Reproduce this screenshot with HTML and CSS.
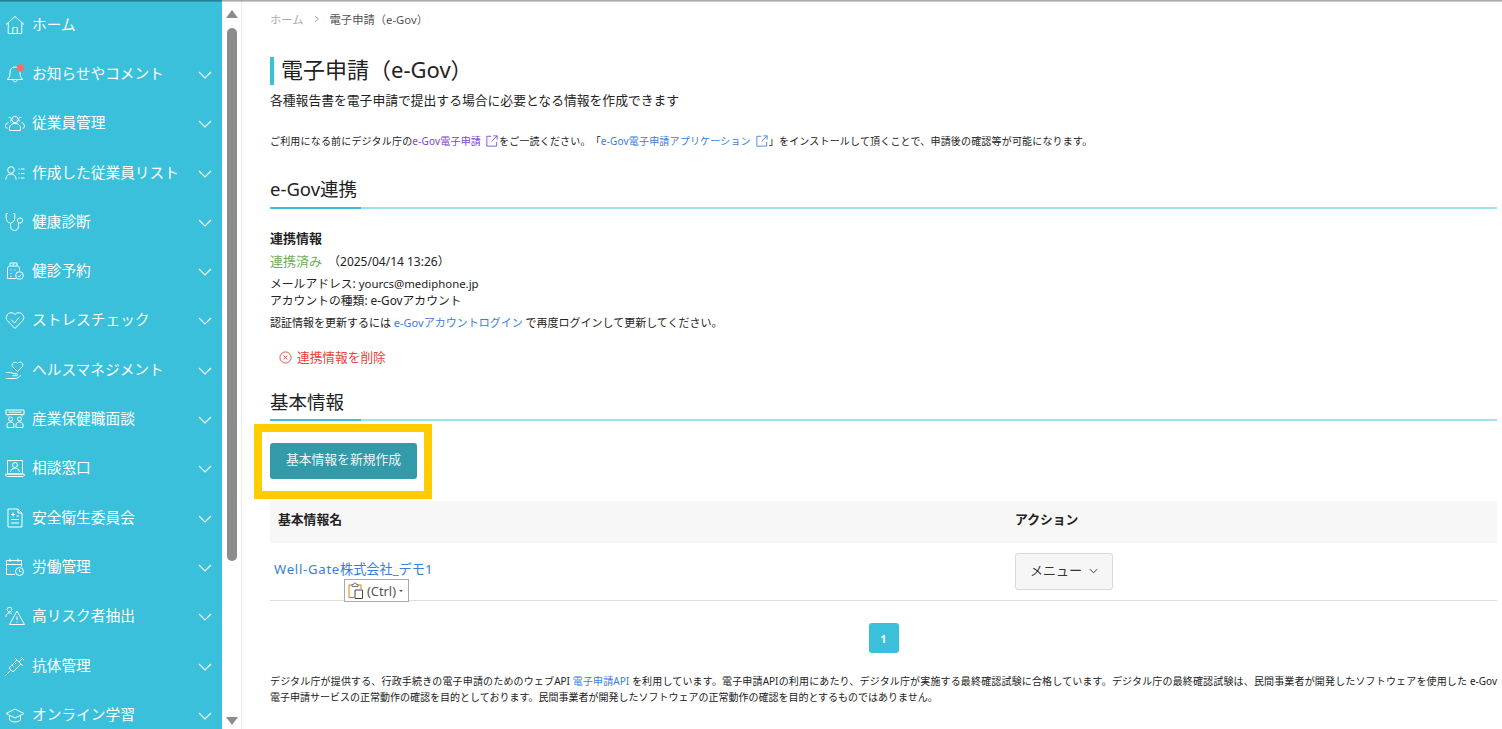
FILE: index.html
```html
<!DOCTYPE html>
<html lang="ja">
<head>
    <meta charset="UTF-8">
    <meta name="viewport" content="width=device-width, initial-scale=1.0">
    <title>電子申請（e-Gov）</title>
    <link rel="stylesheet" href="styles.css">
</head>
<body>
    <div class="top-shadow"></div>
    <nav class="sidebar">
        <a class="nav-item">
            <svg class="nav-icon" viewBox="0 0 20 20"><path d="M1 9.500 10 1.500l9 8M3.200 8v10.500h13.600V8M7.800 18.500v-6h4.400v6"/></svg>
            <span class="nav-label">ホーム</span>
        </a>
        <a class="nav-item">
            <svg class="nav-icon" viewBox="0 0 20 20"><path d="M10 3c-3.500 0-5 2.500-5 5.500 0 3.500-.8 5.500-3 7h16c-2.200-1.500-3-3.500-3-7C15 5.500 13.500 3 10 3zM7.800 15.500c0 3 4.400 3 4.400 0"/><circle class="nav-dot" cx="15.500" cy="4" r="3.800"/></svg>
            <span class="nav-label">お知らせやコメント</span>
            <svg class="nav-chevron" viewBox="0 0 14 8"><path d="M1 1l6 6 6-6"/></svg>
        </a>
        <a class="nav-item">
            <svg class="nav-icon" viewBox="0 0 20 20"><circle cx="10" cy="6.500" r="3.200"/><path d="M4.500 17.500v-2.500c0-3 2.200-4.500 5.500-4.500s5.500 1.500 5.500 4.500v2.500zM3.500 4.500a2 2 0 1 1 1.500 3.700M16.500 4.500a2 2 0 1 0-1.500 3.700M3.500 9.500C1.500 10 .5 11.500.5 13.500c0 1 .6 1.700 2 1.700M16.500 9.500c2 .5 3 2 3 4 0 1-.6 1.700-2 1.700"/></svg>
            <span class="nav-label">従業員管理</span>
            <svg class="nav-chevron" viewBox="0 0 14 8"><path d="M1 1l6 6 6-6"/></svg>
        </a>
        <a class="nav-item">
            <svg class="nav-icon" viewBox="0 0 20 20"><circle cx="6" cy="7" r="3.300"/><path d="M.8 16.500c.3-3.500 2.200-5.500 5.200-5.500s4.900 2 5.200 5.500M13.500 6h1.200M16 6h3.500M13.500 10.500h1.200M16 10.500h3.500M13.500 15h1.200M16 15h3.500"/></svg>
            <span class="nav-label">作成した従業員リスト</span>
            <svg class="nav-chevron" viewBox="0 0 14 8"><path d="M1 1l6 6 6-6"/></svg>
        </a>
        <a class="nav-item">
            <svg class="nav-icon" viewBox="0 0 20 20"><path d="M3 1.500H1.200v4.500c0 3 2 5 4.300 5s4.300-2 4.300-5V1.500H8M5.500 11v3.500c0 2.500 2 4 4 4s4-1.500 4-4V11"/><circle cx="15" cy="8.500" r="2.600"/></svg>
            <span class="nav-label">健康診断</span>
            <svg class="nav-chevron" viewBox="0 0 14 8"><path d="M1 1l6 6 6-6"/></svg>
        </a>
        <a class="nav-item">
            <svg class="nav-icon" viewBox="0 0 20 20"><path d="M11 17.500H2.500V6.500l2-1.500h8l2 1.500v3M5 5V2h7v3M8.500 2.800v1.600M7.700 3.600h1.600M5.500 9h1M9.500 9h1M5.500 12.500h1M5.500 15.500h1"/><circle cx="14.500" cy="14.500" r="3.800"/><path d="M13 14.800l1.200 1.200 2-2.500"/></svg>
            <span class="nav-label">健診予約</span>
            <svg class="nav-chevron" viewBox="0 0 14 8"><path d="M1 1l6 6 6-6"/></svg>
        </a>
        <a class="nav-item">
            <svg class="nav-icon" viewBox="0 0 20 20"><path d="M10 18.500 2.300 10.500C-1.500 6 5.500-.5 10 4.500c4.500-5 11.500 1.500 7.700 6zM6 9.500l3.500 3.500 4.500-5.500"/></svg>
            <span class="nav-label">ストレスチェック</span>
            <svg class="nav-chevron" viewBox="0 0 14 8"><path d="M1 1l6 6 6-6"/></svg>
        </a>
        <a class="nav-item">
            <svg class="nav-icon" viewBox="0 0 20 20"><path d="M12.500 11.500 7.800 6.800C5.500 3.500 10 .5 12.500 3.500c2.500-3 7 0 4.700 3.300zM1 12.500h4.500c1.500 0 2 1.200 3.500 1.200h2.500c1.300 0 1.300 2 0 2H7.500M1 18.500h9.500c2 0 4-2 5.500-3.500"/></svg>
            <span class="nav-label">ヘルスマネジメント</span>
            <svg class="nav-chevron" viewBox="0 0 14 8"><path d="M1 1l6 6 6-6"/></svg>
        </a>
        <a class="nav-item">
            <svg class="nav-icon" viewBox="0 0 20 20"><path d="M1 1h18v4.500H1zM3.500 3.200h13M3 5.500v2M17 5.500v2"/><circle cx="5.500" cy="10" r="2"/><circle cx="14.500" cy="10" r="2"/><path d="M2 18.500v-2.500c0-2 1.500-3 3.500-3s3.500 1 3.500 3v2.500zM11 18.500v-2.500c0-2 1.500-3 3.500-3s3.500 1 3.500 3v2.500z"/></svg>
            <span class="nav-label">産業保健職面談</span>
            <svg class="nav-chevron" viewBox="0 0 14 8"><path d="M1 1l6 6 6-6"/></svg>
        </a>
        <a class="nav-item">
            <svg class="nav-icon" viewBox="0 0 20 20"><path d="M2.500 2.500h15V16h-15zM.8 16h18.400v1.500l-1 1H1.800l-1-1z"/><circle cx="10" cy="7" r="2.500"/><path d="M5.500 14c.3-2.500 2-3.800 4.500-3.800s4.200 1.300 4.500 3.800"/></svg>
            <span class="nav-label">相談窓口</span>
            <svg class="nav-chevron" viewBox="0 0 14 8"><path d="M1 1l6 6 6-6"/></svg>
        </a>
        <a class="nav-item">
            <svg class="nav-icon" viewBox="0 0 20 20"><path d="M3 1h10l4 4v14H3zM13 1v4h4M6 6.500h4M8 4.500v4M11.500 8h2.500M6 11.500h8M6 15h8"/></svg>
            <span class="nav-label">安全衛生委員会</span>
            <svg class="nav-chevron" viewBox="0 0 14 8"><path d="M1 1l6 6 6-6"/></svg>
        </a>
        <a class="nav-item">
            <svg class="nav-icon" viewBox="0 0 20 20"><path d="M10 17.500H1.500V3.500h15v6M1.500 7.500h15M5 1.500v3.500M13 1.500v3.500"/><circle cx="14.500" cy="14.500" r="4"/><path d="M14.500 12.500v2.200h2"/></svg>
            <span class="nav-label">労働管理</span>
            <svg class="nav-chevron" viewBox="0 0 14 8"><path d="M1 1l6 6 6-6"/></svg>
        </a>
        <a class="nav-item">
            <svg class="nav-icon" viewBox="0 0 20 20"><circle cx="4.500" cy="3.500" r="2.300"/><path d="M.8 11c.2-2.500 1.500-4 3.700-4 .8 0 1.500.2 2 .6M12 5 4.500 18.500h15zM12 10.500v3.500M12 15.500v1"/></svg>
            <span class="nav-label">高リスク者抽出</span>
            <svg class="nav-chevron" viewBox="0 0 14 8"><path d="M1 1l6 6 6-6"/></svg>
        </a>
        <a class="nav-item">
            <svg class="nav-icon" viewBox="0 0 20 20"><path d="M.8 19.200 5.500 14.500M4 12l8-8 4 4-8 8zM10 2l8 8M14 6l3.500-3.500M16 1l3 3M7 9l1.500 1.500M9.500 6.500 11 8"/></svg>
            <span class="nav-label">抗体管理</span>
            <svg class="nav-chevron" viewBox="0 0 14 8"><path d="M1 1l6 6 6-6"/></svg>
        </a>
        <a class="nav-item">
            <svg class="nav-icon" viewBox="0 0 20 20"><path d="M10 4 1 8.500l9 4.500 9-4.500zM4.500 10.500v4.500c2.500 2.500 8.500 2.500 11 0v-4.500"/></svg>
            <span class="nav-label">オンライン学習</span>
            <svg class="nav-chevron" viewBox="0 0 14 8"><path d="M1 1l6 6 6-6"/></svg>
        </a>
    </nav>

    <div class="scrollbar">
        <span class="scroll-arrow-up"></span>
        <span class="scroll-thumb"></span>
        <span class="scroll-arrow-down"></span>
    </div>

    <main class="content">
        <div class="breadcrumb">
            <span class="crumb-home">ホーム</span>
            <svg class="crumb-sep" viewBox="0 0 6 8"><path d="M1 1l3.500 3L1 7"/></svg>
            <span>電子申請（e-Gov）</span>
        </div>

        <h1 class="page-title">電子申請（e-Gov）</h1>
        <p class="page-lead">各種報告書を電子申請で提出する場合に必要となる情報を作成できます</p>

        <p class="notice">ご利用になる前にデジタル庁の<a class="visited">e-Gov電子申請<svg class="ext-icon" viewBox="0 0 14 14"><path d="M6 1.500H1v11.500h11.500V8M8.500 1h4.500v4.500M13 1 6.500 7.500"/></svg></a>をご一読ください。「<a>e-Gov電子申請アプリケーション<svg class="ext-icon" viewBox="0 0 14 14"><path d="M6 1.500H1v11.500h11.500V8M8.500 1h4.500v4.500M13 1 6.500 7.500"/></svg></a>」をインストールして頂くことで、申請後の確認等が可能になります。</p>

        <h2 class="section-title title-link">e-Gov連携</h2>

        <h3 class="info-title">連携情報</h3>
        <p class="status"><span class="status-ok">連携済み</span><span class="status-date">（2025/04/14 13:26）</span></p>
        <p class="account">メールアドレス: <span class="account-mail">yourcs@mediphone.jp</span><br>アカウントの種類: e-Govアカウント</p>
        <p class="update-note">認証情報を更新するには <a>e-Govアカウントログイン</a> で再度ログインして更新してください。</p>
        <a class="delete-link">
            <svg class="delete-icon" viewBox="0 0 14 14"><circle cx="7" cy="7" r="6"/><path d="M5 5l4 4M9 5l-4 4"/></svg>
            連携情報を削除
        </a>

        <h2 class="section-title title-basic">基本情報</h2>

        <div class="highlight-box">
            <button class="primary-button">基本情報を新規作成</button>
        </div>

        <div class="info-table">
            <div class="table-head">基本情報名</div>
            <div class="table-head">アクション</div>
            <div class="table-cell name-cell">
                <a class="name-link"><span class="name-latin">Well-Gate</span>株式会社_デモ1</a>
                <div class="paste-popup">
                    <svg class="paste-icon" viewBox="0 0 16 18"><path class="paste-board" d="M6 15.500H1V3h3M10 3h3v4"/><path class="paste-clip" d="M4 4.500V2.500h1.500a1.500 1.500 0 0 1 3 0H10v2z"/><path class="paste-sheet" d="M7 8h7.500v8.500H7z"/></svg>
                    <span>(Ctrl)</span>
                    <span class="paste-caret"></span>
                </div>
            </div>
            <div class="table-cell">
                <button class="menu-button">メニュー<svg class="menu-chevron" viewBox="0 0 10 6"><path d="M1 1l4 4 4-4"/></svg></button>
            </div>
        </div>

        <div class="pagination"><span class="page-current">1</span></div>

        <p class="footnote"><span class="footnote-first">デジタル庁が提供する、行政手続きの電子申請のためのウェブAPI <a>電子申請API</a> を利用しています。電子申請APIの利用にあたり、デジタル庁が実施する最終確認試験に合格しています。デジタル庁の最終確認試験は、民間事業者が開発したソフトウェアを使用した e-Gov</span>電子申請サービスの正常動作の確認を目的としております。民間事業者が開発したソフトウェアの正常動作の確認を目的とするものではありません。</p>
    </main>
</body>
</html>
```

FILE: styles.css
```css
* {
    box-sizing: border-box;
}
html, body {
    height: 100%;
}
body {
    display: flex;
    margin: 0;
    overflow: hidden;
    background-color: #fff;
    color: #222;
    font-family: "Noto Sans", "Noto Sans CJK JP", sans-serif;
    font-size: 12px;
    text-spacing-trim: space-all;
}
a {
    color: #3b7dd8;
}
p, h1, h2, h3 {
    margin: 0;
    font-weight: 400;
}
.top-shadow {
    position: absolute;
    top: 0;
    left: 0;
    right: 0;
    height: 2px;
    background: linear-gradient(rgba(0, 0, 0, 0.4), rgba(0, 0, 0, 0.12));
}

/* sidebar */
.sidebar {
    flex: none;
    width: 222px;
    height: 100%;
    overflow: hidden;
    background-color: #3ac0db;
    color: #fff;
}
.nav-item {
    display: flex;
    align-items: center;
    height: 49.3px;
    padding: 0 10px 3px 5px;
    color: #fff;
}
.nav-icon {
    flex: none;
    width: 20px;
    height: 20px;
    margin-top: 3px;
    margin-right: 7px;
    fill: none;
    stroke: #fff;
    stroke-width: 1;
}
.nav-dot {
    fill: #f26d6d;
    stroke: none;
}
.nav-label {
    flex: 1;
    font-size: 14.7px;
    white-space: nowrap;
}
.nav-chevron {
    flex: none;
    width: 14px;
    height: 8px;
    margin-top: 5px;
    fill: none;
    stroke: #fff;
    stroke-width: 1.1;
}

/* scrollbar */
.scrollbar {
    flex: none;
    display: flex;
    flex-direction: column;
    align-items: center;
    width: 20px;
    height: 100%;
    padding: 10px 0 4px;
    background-color: #fff;
    border-right: 1px solid #eee;
}
.scroll-arrow-up {
    width: 0;
    height: 0;
    border: 6px solid transparent;
    border-top: 0;
    border-bottom: 8px solid #8c8c8c;
}
.scroll-thumb {
    width: 10px;
    height: 533px;
    margin-top: 10px;
    border-radius: 5px;
    background-color: #8c8c8c;
}
.scroll-arrow-down {
    width: 0;
    height: 0;
    margin-top: auto;
    border: 6px solid transparent;
    border-bottom: 0;
    border-top: 8px solid #8c8c8c;
}

/* content */
.content {
    flex: 1;
    min-width: 0;
    padding: 10px 5px 0 28px;
}
.breadcrumb {
    display: flex;
    align-items: center;
    height: 18px;
    font-size: 11.3px;
    color: #555;
}
.crumb-home {
    color: #aaa;
}
.crumb-sep {
    width: 6px;
    height: 8px;
    margin: 0 10px;
    fill: none;
    stroke: #aaa;
}
.page-title {
    height: 28px;
    margin-top: 29px;
    padding-left: 7px;
    border-left: 4px solid #3ac0db;
    font-size: 22px;
    line-height: 24px;
}
.page-lead {
    margin-top: 5px;
    font-size: 12.8px;
    line-height: 20px;
}
.notice {
    margin-top: 23px;
    font-size: 10px;
    letter-spacing: 0.18px;
    line-height: 16px;
    white-space: nowrap;
}
.visited {
    color: #7b3fd6;
}
.ext-icon {
    width: 12px;
    height: 12px;
    margin: 0 1px 0 5px;
    vertical-align: -2px;
    fill: none;
    stroke: currentColor;
    stroke-width: 1;
}
.section-title {
    position: relative;
    height: 34px;
    font-size: 18.5px;
    line-height: 28px;
    border-bottom: 2px solid #9be3ef;
}
.title-link {
    height: 34px;
    margin-top: 26px;
}
.title-basic {
    height: 32px;
    margin-top: 24px;
    line-height: 26px;
}
.section-title::after {
    content: "";
    position: absolute;
    left: 0;
    bottom: -2px;
    width: 91px;
    height: 2px;
    background-color: #3ac0db;
}
.info-title {
    margin-top: 19px;
    font-size: 13px;
    font-weight: 700;
    line-height: 20px;
}
.status {
    margin-top: 3px;
    font-size: 12px;
    line-height: 20px;
}
.status-ok {
    color: #6fae55;
    font-size: 13px;
}
.status-date {
    margin-left: 6px;
}
.account {
    margin-top: 3px;
    font-size: 11.8px;
    line-height: 16px;
}
.account-mail {
    font-size: 11.4px;
}
.update-note {
    margin-top: 6px;
    font-size: 11px;
    line-height: 18px;
}
.delete-link {
    display: flex;
    align-items: center;
    margin: 15px 0 0 9px;
    height: 18px;
    color: #ea4040;
    font-size: 12.7px;
}
.delete-icon {
    width: 13px;
    height: 13px;
    margin: 2px 5px 0 0;
    fill: none;
    stroke: #ea4040;
}
.highlight-box {
    width: 178px;
    height: 75px;
    margin: 3px 0 0 -16px;
    padding: 11px 0 0 8px;
    border: 8px solid #ffcc00;
}
.primary-button {
    display: block;
    width: 147px;
    height: 36px;
    padding: 0 0 5px;
    border: 0;
    border-radius: 3px;
    background-color: #329aa9;
    color: #eaf6f8;
    font-family: inherit;
    font-size: 12.8px;
}
.info-table {
    display: grid;
    grid-template-columns: 737px 1fr;
    margin-top: 2px;
}
.table-head {
    display: flex;
    align-items: center;
    height: 42px;
    padding: 0 0 7px 8px;
    background-color: #f7f7f7;
    font-weight: 700;
    font-size: 12.8px;
}
.table-cell {
    display: flex;
    align-items: center;
    height: 58px;
    padding-left: 8px;
    border-bottom: 1px solid #ddd;
}
.name-cell {
    position: relative;
    padding-left: 4px;
}
.name-link {
    padding-bottom: 7px;
    font-size: 13.2px;
}
.name-latin {
    letter-spacing: 0.7px;
}
.paste-popup {
    position: absolute;
    left: 74px;
    top: 36px;
    display: flex;
    align-items: center;
    gap: 3px;
    width: 65px;
    height: 23px;
    padding-left: 3px;
    background-color: #fff;
    border: 1px solid #aaa;
    color: #555;
    font-size: 12.8px;
}
.paste-icon {
    width: 16px;
    height: 18px;
    fill: none;
}
.paste-board {
    stroke: #e57c00;
}
.paste-clip {
    stroke: #777;
}
.paste-sheet {
    stroke: #444;
}
.paste-caret {
    width: 0;
    height: 0;
    border: 2px solid transparent;
    border-bottom: 0;
    border-top: 2px solid #555;
}
.menu-button {
    display: flex;
    align-items: center;
    justify-content: center;
    width: 98px;
    height: 37px;
    padding: 0 0 5px;
    background-color: #f6f6f6;
    border: 1px solid #d9d9d9;
    border-radius: 3px;
    color: #333;
    font-family: inherit;
    font-size: 13px;
}
.menu-chevron {
    width: 9px;
    height: 6px;
    margin-left: 7px;
    margin-top: 4px;
    fill: none;
    stroke: #222;
}
.pagination {
    display: flex;
    justify-content: center;
    margin-top: 22px;
}
.page-current {
    display: flex;
    align-items: center;
    justify-content: center;
    width: 30px;
    height: 30px;
    border-radius: 3px;
    background-color: #3ac0db;
    color: #fff;
    font-weight: 700;
    font-size: 11px;
}
.footnote {
    margin-top: 20px;
    font-size: 10px;
    line-height: 16px;
}
.footnote-first {
    display: block;
    text-align-last: justify;
}
```
